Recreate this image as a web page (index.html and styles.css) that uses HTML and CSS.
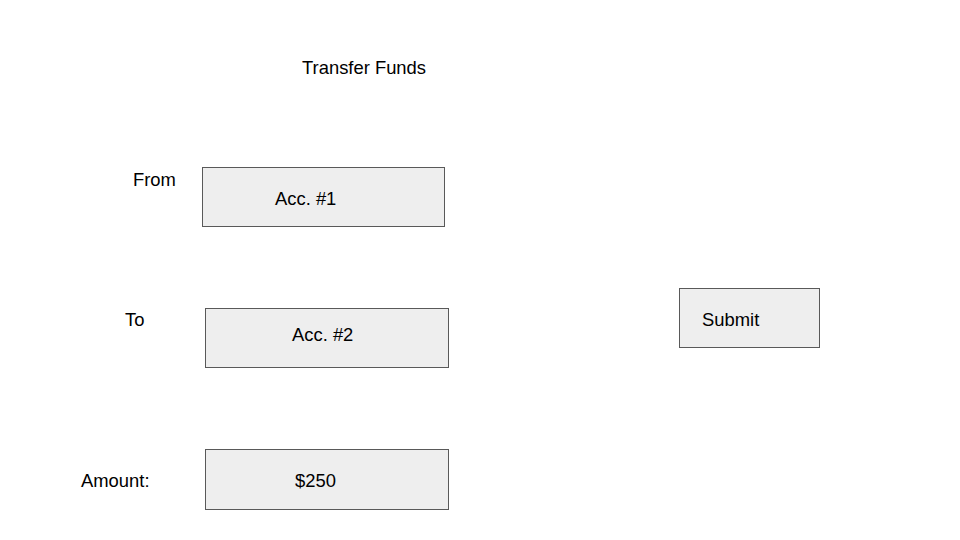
FILE: index.html
```html
<!DOCTYPE html>
<html lang="en">
<head>
<meta charset="utf-8">
<title>Transfer Funds</title>
<link rel="stylesheet" href="styles.css">
</head>
<body>
<main class="slide">
  <h1 class="title">Transfer Funds</h1>

  <span class="label label-from">From</span>
  <div class="field field-from"><span class="value">Acc. #1</span></div>

  <span class="label label-to">To</span>
  <div class="field field-to"><span class="value">Acc. #2</span></div>

  <span class="label label-amount">Amount:</span>
  <div class="field field-amount"><span class="value">$250</span></div>

  <div class="field button-submit"><span class="value">Submit</span></div>
</main>
</body>
</html>
```

FILE: styles.css
```css
html, body {
  margin: 0;
  padding: 0;
  background: #ffffff;
}

.slide {
  position: relative;
  width: 960px;
  height: 540px;
  overflow: hidden;
  font-family: "Liberation Sans", Arial, sans-serif;
  font-size: 18.4px;
  line-height: 21px;
  color: #000000;
}

.title {
  position: absolute;
  left: 302px;
  top: 57px;
  margin: 0;
  font-size: 18.4px;
  font-weight: normal;
  line-height: 21px;
}

.label {
  position: absolute;
  white-space: nowrap;
}

.label-from { left: 133px; top: 169px; }
.label-to { left: 125px; top: 309px; }
.label-amount { left: 81px; top: 470px; }

.field {
  position: absolute;
  box-sizing: border-box;
  border: 1px solid #595959;
  background: #eeeeee;
  white-space: nowrap;
}

.value {
  display: block;
}

.field-from {
  left: 202px;
  top: 167px;
  width: 243px;
  height: 60px;
  padding: 20px 0 0 72px;
}

.field-to {
  left: 205px;
  top: 308px;
  width: 244px;
  height: 60px;
  padding: 15px 0 0 86px;
}

.field-amount {
  left: 205px;
  top: 449px;
  width: 244px;
  height: 61px;
  padding: 20px 0 0 89px;
}

.button-submit {
  left: 679px;
  top: 288px;
  width: 141px;
  height: 60px;
  padding: 20px 0 0 22px;
}
```
